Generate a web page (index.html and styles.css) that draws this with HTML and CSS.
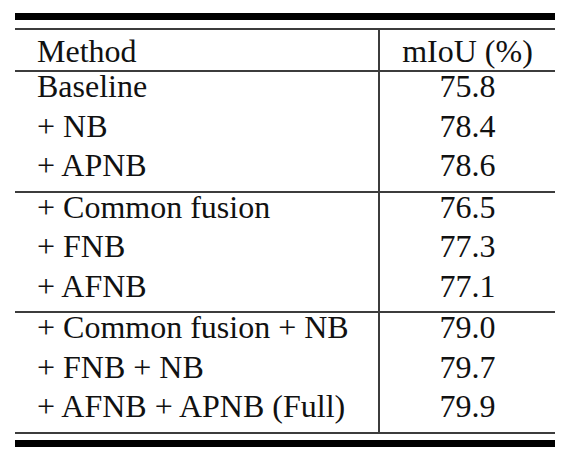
FILE: index.html
```html
<!DOCTYPE html>
<html>
<head>
<meta charset="utf-8">
<link rel="stylesheet" href="styles.css">
</head>
<body>
<div class="tbl">
  <div class="inner">
    <div class="row head"><div class="c1">Method</div><div class="c2">mIoU (%)</div></div>
    <div class="group">
      <div class="row"><div class="c1">Baseline</div><div class="c2">75.8</div></div>
      <div class="row"><div class="c1">+ NB</div><div class="c2">78.4</div></div>
      <div class="row"><div class="c1">+ APNB</div><div class="c2">78.6</div></div>
    </div>
    <div class="group">
      <div class="row"><div class="c1">+ Common fusion</div><div class="c2">76.5</div></div>
      <div class="row"><div class="c1">+ FNB</div><div class="c2">77.3</div></div>
      <div class="row"><div class="c1">+ AFNB</div><div class="c2">77.1</div></div>
    </div>
    <div class="group">
      <div class="row"><div class="c1">+ Common fusion + NB</div><div class="c2">79.0</div></div>
      <div class="row"><div class="c1">+ FNB + NB</div><div class="c2">79.7</div></div>
      <div class="row"><div class="c1">+ AFNB + APNB (Full)</div><div class="c2">79.9</div></div>
    </div>
  </div>
</div>
</body>
</html>
```

FILE: styles.css
```css
html, body {
  margin: 0;
  padding: 0;
  background: #fff;
}
body {
  font-family: "Liberation Serif", "Times New Roman", serif;
  font-size: 32px;
  line-height: 28px;
  color: #111;
}
.tbl {
  margin: 13px 0 0 15px;
  width: 540px;
  border-top: 7px solid #000;
  border-bottom: 7px solid #000;
}
.inner {
  margin: 8px 0 6px;
  border-top: 2px solid #3c3c3c;
  border-bottom: 2px solid #3c3c3c;
}
.group {
  border-top: 2px solid #3c3c3c;
}
.row {
  display: grid;
  grid-template-columns: 363px 1fr;
  height: 39.5px;
}
.row.head {
  height: 40px;
}
.row.head .c1,
.row.head .c2 {
  padding-top: 7px;
}
.c1 {
  padding-left: 22px;
  white-space: nowrap;
}
.c2 {
  border-left: 2px solid #3c3c3c;
  text-align: center;
  white-space: nowrap;
}
```
